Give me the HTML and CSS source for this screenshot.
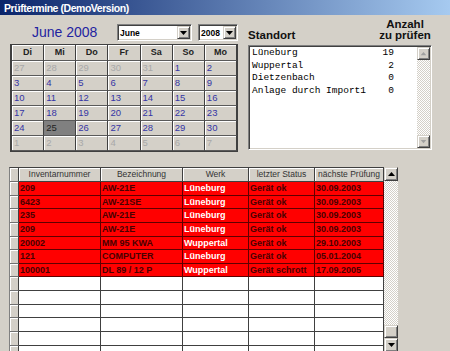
FILE: index.html
```html
<!DOCTYPE html>
<html>
<head>
<meta charset="utf-8">
<link rel="stylesheet" href="styles.css">
</head>
<body>
<div class="window">
  <div class="titlebar">Prüftermine (DemoVersion)</div>
  <div class="top">
    <div class="cal-col">
      <div class="cal-head">
        <div class="cal-title">June 2008</div>
        <div class="combo combo-month">
          <span class="combo-text">June</span>
          <span class="btn3d combo-btn"><svg width="7" height="4" viewBox="0 0 7 4"><polygon points="0,0 7,0 3.5,4" fill="#000"/></svg></span>
        </div>
        <div class="combo combo-year">
          <span class="combo-text">2008</span>
          <span class="btn3d combo-btn"><svg width="7" height="4" viewBox="0 0 7 4"><polygon points="0,0 7,0 3.5,4" fill="#000"/></svg></span>
        </div>
      </div>
      <div class="calendar">
        <div class="cell dow">Di</div><div class="cell dow">Mi</div><div class="cell dow">Do</div><div class="cell dow">Fr</div><div class="cell dow">Sa</div><div class="cell dow">So</div><div class="cell dow">Mo</div>
        <div class="cell day other">27</div><div class="cell day other">28</div><div class="cell day other">29</div><div class="cell day other">30</div><div class="cell day other">31</div><div class="cell day">1</div><div class="cell day">2</div>
        <div class="cell day">3</div><div class="cell day">4</div><div class="cell day">5</div><div class="cell day">6</div><div class="cell day">7</div><div class="cell day">8</div><div class="cell day">9</div>
        <div class="cell day">10</div><div class="cell day">11</div><div class="cell day">12</div><div class="cell day">13</div><div class="cell day">14</div><div class="cell day">15</div><div class="cell day">16</div>
        <div class="cell day">17</div><div class="cell day">18</div><div class="cell day">19</div><div class="cell day">20</div><div class="cell day">21</div><div class="cell day">22</div><div class="cell day">23</div>
        <div class="cell day">24</div><div class="cell day sel">25</div><div class="cell day">26</div><div class="cell day">27</div><div class="cell day">28</div><div class="cell day">29</div><div class="cell day">30</div>
        <div class="cell day other">1</div><div class="cell day other">2</div><div class="cell day other">3</div><div class="cell day other">4</div><div class="cell day other">5</div><div class="cell day other">6</div><div class="cell day other">7</div>
      </div>
    </div>
    <div class="loc-col">
      <div class="loc-head">
        <div class="loc-label">Standort</div>
        <div class="loc-count">Anzahl<br>zu prüfen</div>
      </div>
      <div class="listbox">
        <div class="list-items">
          <div class="list-row"><span>Lüneburg</span><span>19</span></div>
          <div class="list-row"><span>Wuppertal</span><span>2</span></div>
          <div class="list-row"><span>Dietzenbach</span><span>0</span></div>
          <div class="list-row"><span>Anlage durch Import1</span><span>0</span></div>
        </div>
        <div class="sb-small">
          <div class="btn3d sb-btn"><svg width="7" height="4" viewBox="0 0 7 5"><polygon points="0,4 7,4 3.5,0" fill="#a0a0a0"/></svg></div>
          <div class="sb-track"></div>
          <div class="btn3d sb-btn"><svg width="7" height="4" viewBox="0 0 7 5"><polygon points="0,0 7,0 3.5,4" fill="#a0a0a0"/></svg></div>
        </div>
      </div>
    </div>
  </div>
  <div class="grid-wrap">
    <div class="table">
      <div class="row head">
        <div class="gsel"></div><div class="gh">Inventarnummer</div><div class="gh">Bezeichnung</div><div class="gh">Werk</div><div class="gh">letzter Status</div><div class="gh">nächste Prüfung</div>
      </div>
      <div class="row red"><div class="gsel"></div><div class="gc">209</div><div class="gc">AW-21E</div><div class="gc werk">Lüneburg</div><div class="gc">Gerät ok</div><div class="gc">30.09.2003</div></div>
      <div class="row red"><div class="gsel"></div><div class="gc">6423</div><div class="gc">AW-21SE</div><div class="gc werk">Lüneburg</div><div class="gc">Gerät ok</div><div class="gc">30.09.2003</div></div>
      <div class="row red"><div class="gsel"></div><div class="gc">235</div><div class="gc">AW-21E</div><div class="gc werk">Lüneburg</div><div class="gc">Gerät ok</div><div class="gc">30.09.2003</div></div>
      <div class="row red"><div class="gsel"></div><div class="gc">209</div><div class="gc">AW-21E</div><div class="gc werk">Lüneburg</div><div class="gc">Gerät ok</div><div class="gc">30.09.2003</div></div>
      <div class="row red"><div class="gsel"></div><div class="gc">20002</div><div class="gc">MM 95 KWA</div><div class="gc werk">Wuppertal</div><div class="gc">Gerät ok</div><div class="gc">29.10.2003</div></div>
      <div class="row red"><div class="gsel"></div><div class="gc">121</div><div class="gc">COMPUTER</div><div class="gc werk">Lüneburg</div><div class="gc">Gerät ok</div><div class="gc">05.01.2004</div></div>
      <div class="row red"><div class="gsel"></div><div class="gc">100001</div><div class="gc">DL 89 / 12 P</div><div class="gc werk">Wuppertal</div><div class="gc">Gerät schrott</div><div class="gc">17.09.2005</div></div>
      <div class="row empty"><div class="gsel"></div><div class="gc"></div><div class="gc"></div><div class="gc"></div><div class="gc"></div><div class="gc"></div></div>
      <div class="row empty"><div class="gsel"></div><div class="gc"></div><div class="gc"></div><div class="gc"></div><div class="gc"></div><div class="gc"></div></div>
      <div class="row empty"><div class="gsel"></div><div class="gc"></div><div class="gc"></div><div class="gc"></div><div class="gc"></div><div class="gc"></div></div>
      <div class="row empty"><div class="gsel"></div><div class="gc"></div><div class="gc"></div><div class="gc"></div><div class="gc"></div><div class="gc"></div></div>
      <div class="row empty"><div class="gsel"></div><div class="gc"></div><div class="gc"></div><div class="gc"></div><div class="gc"></div><div class="gc"></div></div>
      <div class="row empty"><div class="gsel"></div><div class="gc"></div><div class="gc"></div><div class="gc"></div><div class="gc"></div><div class="gc"></div></div>
    </div>
    <div class="sb-big">
      <div class="btn3d sbb-btn"><svg width="7" height="4" viewBox="0 0 7 4"><polygon points="0,4 7,4 3.5,0" fill="#000"/></svg></div>
      <div class="sb-track"></div>
      <div class="btn3d sbb-thumb"></div>
      <div class="btn3d sbb-btn"><svg width="7" height="4" viewBox="0 0 7 4"><polygon points="0,0 7,0 3.5,4" fill="#000"/></svg></div>
    </div>
  </div>
</div>
</body>
</html>
```
FILE: styles.css
```css
body {
  margin: 0;
  background: #d4d0c8;
  overflow: hidden;
}

.window {
  width: 450px;
  height: 351px;
  overflow: hidden;
  background: #d4d0c8;
  font-family: "Liberation Sans", Arial, sans-serif;
}

.titlebar {
  height: 15px;
  box-sizing: border-box;
  padding: 1px 0 0 4px;
  line-height: 14px;
  color: #fff;
  font-weight: bold;
  font-size: 10.5px;
  letter-spacing: -0.45px;
  white-space: nowrap;
  background: linear-gradient(to right, #0a246a, #a6caf0);
}

.top {
  display: flex;
  padding-left: 10px;
  height: 137px;
}

.cal-col {
  width: 228px;
}

.cal-head {
  display: flex;
  align-items: center;
  height: 17px;
  margin-top: 9px;
}

.cal-title {
  width: 107px;
  box-sizing: border-box;
  padding-left: 22px;
  font-size: 14px;
  line-height: 17px;
  color: #2323a0;
  white-space: nowrap;
}

.combo {
  height: 17px;
  box-sizing: border-box;
  background: #fff;
  border: 1px solid;
  border-color: #808080 #fff #fff #808080;
  box-shadow: inset 1px 1px #404040, inset -1px -1px #d4d0c8;
  display: flex;
  align-items: center;
}

.combo-month {
  width: 75px;
  margin-right: 6px;
}

.combo-year {
  width: 40px;
}

.combo-text {
  flex: 1;
  font-weight: bold;
  font-size: 8.5px;
  padding-left: 2px;
  color: #000;
}

.combo-btn {
  width: 13px;
  height: 13px;
  margin-right: 1px;
}

.btn3d {
  box-sizing: border-box;
  background: #d4d0c8;
  border: 1px solid;
  border-color: #d4d0c8 #404040 #404040 #d4d0c8;
  box-shadow: inset 1px 1px #fff, inset -1px -1px #808080;
  display: flex;
  align-items: center;
  justify-content: center;
}

.btn3d svg {
  display: block;
}

.calendar {
  margin-top: 3px;
  width: 228px;
  box-sizing: border-box;
  display: grid;
  grid-template-columns: repeat(7, 1fr);
  grid-template-rows: 16px repeat(6, 15px);
  border-style: solid;
  border-color: #404040;
  border-width: 1px 1px 1px 2px;
}

.cell {
  box-sizing: border-box;
  border-right: 1px solid #404040;
  border-bottom: 1px solid #5a5a5a;
  box-shadow: inset 1px 1px #fff;
  overflow: hidden;
}

.dow {
  font-weight: bold;
  font-size: 9px;
  text-align: center;
  line-height: 15px;
  color: #222;
}

.day {
  font-size: 9.5px;
  line-height: 14px;
  padding-left: 2px;
  color: #3535a5;
}

.day.other {
  color: #a8a8a8;
}

.day.sel {
  background: #808080;
  color: #222;
  box-shadow: none;
}

.loc-col {
  width: 184px;
  margin-left: 10px;
}

.loc-head {
  height: 30px;
  box-sizing: border-box;
  padding-bottom: 4px;
  display: flex;
  justify-content: space-between;
  align-items: flex-end;
  font-weight: bold;
  font-size: 11.5px;
  line-height: 11px;
  color: #111;
}

.loc-count {
  width: 54px;
  text-align: center;
}

.listbox {
  height: 105px;
  box-sizing: border-box;
  background: #fff;
  border: 1px solid;
  border-color: #808080 #fff #fff #808080;
  box-shadow: inset 1px 1px #404040, inset -1px -1px #d4d0c8;
  padding: 1px;
  display: flex;
}

.list-items {
  flex: 1;
  padding-left: 2px;
  font-family: "Liberation Mono", "Courier New", monospace;
  font-size: 9.5px;
  line-height: 12.7px;
  color: #000;
}

.list-row {
  width: 142px;
  display: flex;
  justify-content: space-between;
  white-space: pre;
}

.sb-small {
  width: 13px;
  display: flex;
  flex-direction: column;
}

.sb-btn {
  height: 13px;
  flex: none;
}

.sb-track {
  flex: 1;
  background-color: #fff;
  background-image: conic-gradient(#d4d0c8 25%, #fff 0 50%, #d4d0c8 0 75%, #fff 0);
  background-size: 2px 2px;
}

.grid-wrap {
  display: flex;
  margin-top: 15px;
  padding-left: 9px;
}

.table {
  display: grid;
  grid-template-columns: 9px 82px 82px 66px 66px 69px;
  grid-template-rows: 14px;
  grid-auto-rows: 13.65px;
  align-content: start;
  border-left: 1px solid #808080;
  border-top: 1px solid #404040;
  height: 184px;
  overflow: hidden;
}

.row {
  display: contents;
}

.gsel {
  box-sizing: border-box;
  background: #d4d0c8;
  box-shadow: inset 1px 1px #fff;
  border-right: 1px solid #404040;
  border-bottom: 1px solid #707070;
}

.gh {
  box-sizing: border-box;
  background: #d4d0c8;
  box-shadow: inset 1px 1px #fff;
  border-right: 1px solid #404040;
  border-bottom: 1px solid #404040;
  font-size: 8.5px;
  line-height: 13px;
  color: #333;
  text-align: center;
  white-space: nowrap;
  overflow: hidden;
}

.gc {
  box-sizing: border-box;
  border-right: 1px solid #404040;
  border-bottom: 1px solid #404040;
  padding-left: 1px;
  font-size: 9px;
  font-weight: bold;
  line-height: 12.65px;
  white-space: nowrap;
  overflow: hidden;
  background: #fff;
}

.red .gc {
  background: #ff0000;
  color: #4a0000;
  border-color: #600000;
}

.red .gc.werk {
  color: #fff;
}

.sb-big {
  width: 14px;
  height: 185px;
  display: flex;
  flex-direction: column;
}

.sbb-btn {
  height: 14px;
  flex: none;
}

.sbb-thumb {
  height: 13px;
  flex: none;
}
```
